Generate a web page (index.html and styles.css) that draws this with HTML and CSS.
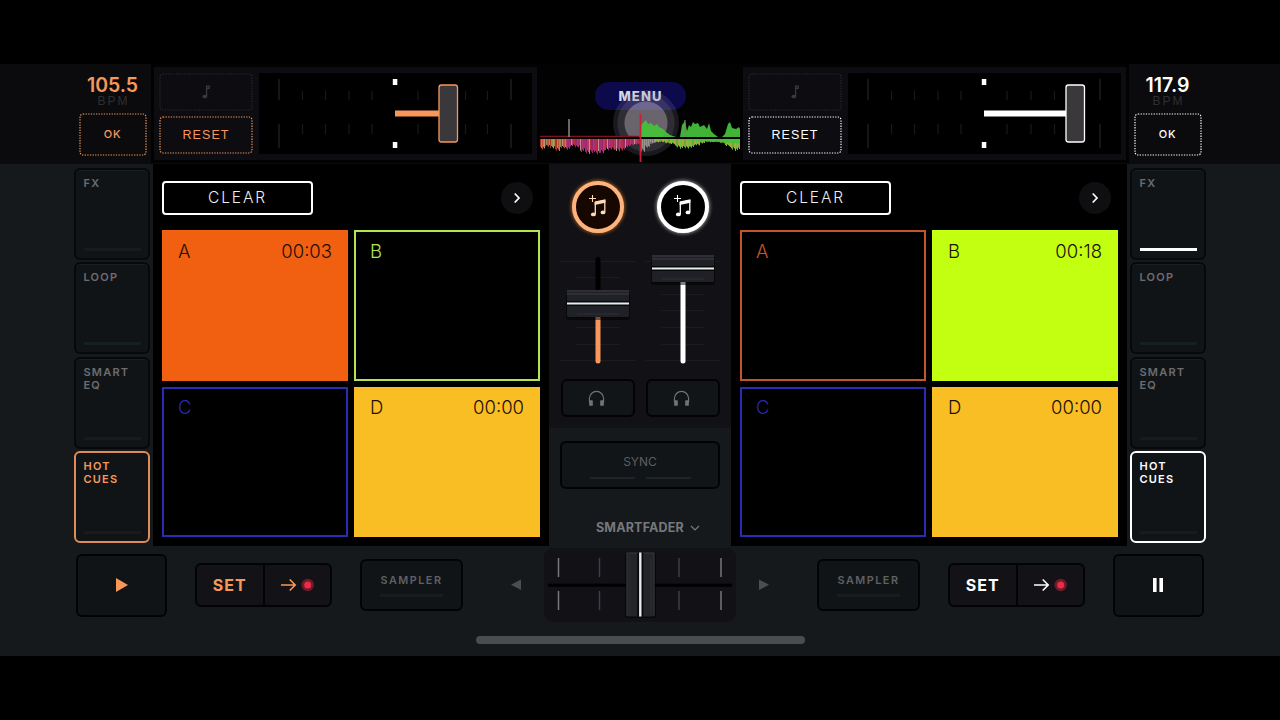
FILE: index.html
```html
<!DOCTYPE html>
<html lang="en">
<head>
    <meta charset="UTF-8">
    <meta name="viewport" content="width=device-width, initial-scale=1.0">
    <title>DJ Decks</title>
    <link rel="stylesheet" href="styles.css">
</head>
<body>
    <!-- shared icons -->
    <svg class="defs" width="0" height="0">
        <symbol id="note" viewBox="0 0 10 14">
            <path d="M5.6 11V1.2h2.6v2.2H5.6" fill="none" stroke="currentColor" stroke-width="1.3"/>
            <ellipse cx="3.8" cy="11.6" rx="2.4" ry="1.8" fill="currentColor"/>
        </symbol>
        <symbol id="add-music" viewBox="0 0 20 24">
            <path d="M1 4.5h7M4.5 1v7" stroke="currentColor" stroke-width="1.1"/>
            <path d="M7.3 20V8.5l9.5-2V18" fill="none" stroke="currentColor" stroke-width="1.3"/>
            <path d="M6.7 7.5l10.7-2.3v3.6L6.7 11z" fill="currentColor"/>
            <ellipse cx="5.4" cy="20.4" rx="2.5" ry="1.9" fill="currentColor"/>
            <ellipse cx="15" cy="18.4" rx="2.4" ry="1.9" fill="currentColor"/>
        </symbol>
        <symbol id="headphones" viewBox="0 0 18 18">
            <path d="M1.5 13V9a7.5 7.5 0 0 1 15 0v4" fill="none" stroke="currentColor" stroke-width="1.2"/>
            <rect x="1.2" y="10.8" width="3.9" height="6" rx="1" fill="currentColor"/>
            <rect x="12.9" y="10.8" width="3.9" height="6" rx="1" fill="currentColor"/>
        </symbol>
        <symbol id="go-record" viewBox="0 0 34 14">
            <path d="M1 7h14M9.7 1.5L15.2 7l-5.500 5.500" fill="none" stroke="currentColor" stroke-width="1.6"/>
            <circle cx="27.7" cy="7" r="6.2" fill="#6d1a2a"/>
            <circle cx="27.7" cy="7" r="3.5" fill="#ee2b45"/>
        </symbol>
        <symbol id="chevron-right" viewBox="0 0 8 12">
            <path d="M1.7 1.5L6 6l-4.300 4.500" fill="none" stroke="currentColor" stroke-width="1.7"/>
        </symbol>
        <symbol id="pitch-scale" viewBox="0 0 273 81">
            <path d="M20 6v21M20 51v24M252 6v21M252 51v24" stroke="#232325" stroke-width="1.3"/>
            <path d="M43.5 18v9M66.5 18v9M90 18v9M113 18v9M159 18v9M183 18v9M206.5 18v9M228.5 18v9M43.5 51v10M66.5 51v10M90 51v10M113 51v10M159 51v10M183 51v10M206.5 51v10M228.5 51v10" stroke="#19191b" stroke-width="1.2"/>
            <path d="M133.8 6h4.500v6h-4.500zM133.8 69h4.500v6h-4.500z" fill="#fff"/>
        </symbol>
        <symbol id="fader-cap" viewBox="-1 0 64 32">
            <rect x="-1" y="4" width="64" height="26" rx="3" fill="#000" opacity=".5"/>
            <rect y="0" width="62" height="27" rx="1" fill="#202126"/>
            <path d="M0 1h62M0 4h62" stroke="#3c3d42"/>
            <path d="M10 24h42" stroke="#2e2f34"/>
            <path d="M0 13.5h62" stroke="#08080a" stroke-width="5"/>
            <path d="M0 13.5h62" stroke="#e4efee" stroke-width="2.2"/>
        </symbol>
    </svg>

    <div class="app">
        <div class="top">
            <div class="bpm left">
                <div class="bpm-value">105.5</div>
                <div class="bpm-label">BPM</div>
                <button class="dotted ok"><svg class="dots"><rect/></svg>OK</button>
            </div>
            <div class="pitch left">
                <div class="pitch-buttons">
                    <button class="dotted muted"><svg class="dots"><rect/></svg><svg width="10" height="14"><use href="#note"/></svg></button>
                    <button class="dotted"><svg class="dots"><rect/></svg>RESET</button>
                </div>
                <svg class="pitch-slider" width="273" height="81">
                    <use href="#pitch-scale"/>
                    <rect x="136" y="37.5" width="45" height="6" fill="currentColor"/>
                    <rect x="180" y="12" width="18.5" height="57" rx="2.5" fill="#3a383b" stroke="currentColor" stroke-width="1.3"/>
                </svg>
            </div>
            <div class="wave">
                <div class="menu">MENU</div>
                <div class="touch"></div>
                <svg id="wave" width="200" height="95" viewBox="0 0 200 95">
                    <g id="bars"></g>
                    <path d="M0 69.3h99" stroke="#7d1420" stroke-width="1.2"/>
                    <path d="M29 52v18" stroke="#8d8888" stroke-width="1.5"/>
                    <path d="M101 70V58l3-3 2-2 2 4 3-1 3 3 3-2 2 3 4 2 3 3 4 3 6 2h4l2-12 3-4 2 10 2-6 2 2 2-5 2 2 3-1 2 4 4-2 3 4 2-6 2 8 3 3 4 3h4l3-3 3-10 2-2 2 6 4 1 3-2 2 4 2 1 2-3 3 2v13z" fill="#46c23b" opacity=".93"/>
                    <path d="M145 70V53" stroke="#6d8a67" stroke-width="1.2"/>
                    <path d="M0 71h200" stroke="#000" stroke-width="2"/>
                    <path d="M100.5 47v49" stroke="#c91f37" stroke-width="1.8"/>
                </svg>
            </div>
            <div class="pitch right">
                <div class="pitch-buttons">
                    <button class="dotted muted"><svg class="dots"><rect/></svg><svg width="10" height="14"><use href="#note"/></svg></button>
                    <button class="dotted"><svg class="dots"><rect/></svg>RESET</button>
                </div>
                <svg class="pitch-slider" width="273" height="81">
                    <use href="#pitch-scale"/>
                    <rect x="136" y="37.5" width="83" height="6" fill="currentColor"/>
                    <rect x="218" y="12" width="18.5" height="57" rx="2.5" fill="#3a383b" stroke="currentColor" stroke-width="1.3"/>
                </svg>
            </div>
            <div class="bpm right">
                <div class="bpm-value">117.9</div>
                <div class="bpm-label">BPM</div>
                <button class="dotted ok"><svg class="dots"><rect/></svg>OK</button>
            </div>
        </div>

        <div class="main">
            <div class="tabs left">
                <div class="tab">FX<i></i></div>
                <div class="tab green">LOOP<i></i></div>
                <div class="tab">SMART<br>EQ<i></i></div>
                <div class="tab active">HOT<br>CUES<i></i></div>
            </div>

            <div class="cues">
                <div class="cues-head">
                    <button class="clear">CLEAR</button>
                    <button class="next"><svg width="8" height="12"><use href="#chevron-right"/></svg></button>
                </div>
                <div class="pads">
                    <div class="pad orange filled"><span>A</span><span>00:03</span></div>
                    <div class="pad lime"><span>B</span></div>
                    <div class="pad blue"><span>C</span></div>
                    <div class="pad yellow filled"><span>D</span><span>00:00</span></div>
                </div>
            </div>

            <div class="mixer">
                <div class="channels">
                    <div class="channel left">
                        <button class="load"><svg width="20" height="24"><use href="#add-music"/></svg></button>
                        <svg class="volume" width="76" height="120">
                            <path d="M0 11.5h76M0 110.5h76M16 27.5h44M16 77.5h44M16 94.5h44" stroke="#1b1b20"/>
                            <path d="M38 9.5v50" stroke="#000" stroke-width="5" stroke-linecap="round"/>
                            <path d="M38 60v51" stroke="currentColor" stroke-width="5" stroke-linecap="round"/>
                            <use href="#fader-cap" x="6" y="40" width="64" height="32"/>
                        </svg>
                        <button class="cue"><svg width="17" height="17"><use href="#headphones"/></svg></button>
                    </div>
                    <div class="channel right">
                        <button class="load"><svg width="20" height="24"><use href="#add-music"/></svg></button>
                        <svg class="volume" width="76" height="120">
                            <path d="M0 11.5h76M0 110.5h76M16 44.5h44M16 60.5h44M16 77.5h44M16 94.5h44" stroke="#1b1b20"/>
                            <path d="M38 20v91" stroke="currentColor" stroke-width="5" stroke-linecap="round"/>
                            <use href="#fader-cap" x="6" y="5" width="64" height="32"/>
                        </svg>
                        <button class="cue"><svg width="17" height="17"><use href="#headphones"/></svg></button>
                    </div>
                </div>
                <button class="sync">SYNC<div class="sync-leds"><i></i><i></i></div></button>
                <div class="smartfader">SMARTFADER
                    <svg width="10" height="6"><path d="M1 1l4 4 4-4" fill="none" stroke="currentColor" stroke-width="1.2"/></svg>
                </div>
            </div>

            <div class="cues">
                <div class="cues-head">
                    <button class="clear">CLEAR</button>
                    <button class="next"><svg width="8" height="12"><use href="#chevron-right"/></svg></button>
                </div>
                <div class="pads">
                    <div class="pad orange"><span>A</span></div>
                    <div class="pad lime filled"><span>B</span><span>00:18</span></div>
                    <div class="pad blue"><span>C</span></div>
                    <div class="pad yellow filled"><span>D</span><span>00:00</span></div>
                </div>
            </div>

            <div class="tabs right">
                <div class="tab lit">FX<i></i></div>
                <div class="tab green">LOOP<i></i></div>
                <div class="tab">SMART<br>EQ<i></i></div>
                <div class="tab active">HOT<br>CUES<i></i></div>
            </div>
        </div>

        <div class="bottom">
            <div class="transport left">
                <button class="play"><svg width="12" height="14"><path d="M0 0l12 7L0 14z" fill="currentColor"/></svg></button>
                <div class="set"><span>SET</span><span><svg width="34" height="14"><use href="#go-record"/></svg></span></div>
                <button class="sampler">SAMPLER<i></i></button>
                <svg class="nudge" width="10" height="12"><path d="M10 .5v10.500L0 5.800z" fill="currentColor"/></svg>
            </div>
            <svg class="crossfader" width="192" height="74">
                <rect width="192" height="74" rx="9" fill="#111116"/>
                <path d="M4 37.3h184" stroke="#000" stroke-width="3"/>
                <path d="M14.5 10v19M14.5 43v19M177 10v19M177 43v19" stroke="#77777b" stroke-width="1.5"/>
                <path d="M55.5 10v19M55.5 43v19M135 10v19M135 43v19" stroke="#3f3f43" stroke-width="1.5"/>
                <rect x="81" y="5" width="31" height="65" rx="2" fill="#000" opacity=".5"/>
                <rect x="82.5" y="4.5" width="28" height="64" rx="1" fill="#232428"/>
                <path d="M83 5v63M110 5v63M83 5h27" stroke="#3b3c40" stroke-width=".8" fill="none"/>
                <path d="M86 7v60M107 10v56" stroke="#303135" stroke-width=".8" fill="none"/>
                <path d="M96.3 4.5v64" stroke="#08080a" stroke-width="6"/>
                <path d="M96.3 4.5v64" stroke="#e9e9ee" stroke-width="2.4"/>
            </svg>
            <div class="transport right">
                <svg class="nudge" width="10" height="12"><path d="M0 .5v10.500l10-5.200z" fill="currentColor"/></svg>
                <button class="sampler">SAMPLER<i></i></button>
                <div class="set"><span>SET</span><span><svg width="34" height="14"><use href="#go-record"/></svg></span></div>
                <button class="play"><svg width="12" height="14"><path d="M0 0h3.600v14H0zM6.400 0H10v14H6.400z" fill="currentColor"/></svg></button>
            </div>
        </div>
        <div class="home-bar"></div>
    </div>

    <script>
        // lower half of the waveform, one bar per pixel
        const bars = document.getElementById('bars');
        const leftColors = ['#a8352f', '#a08c48', '#c0562f', '#96904a', '#b23c70', '#9a2863', '#bd2c45', '#a52a78'];
        const rightColors = ['#5fae3c', '#9fae3e', '#6fbf3f', '#a8a33f', '#4f5bb0', '#5fc03c'];
        const heights = [10, 7, 9, 11, 9, 10, 7, 8, 12, 14, 13, 15, 13, 11, 10, 12, 11, 8, 6, 5, 12, 8, 4, 3, 3, 4, 5, 8, 9, 9, 8, 6, 4, 3, 3, 2, 4, 7, 10, 11];

        for (let x = 0; x < 200; x++) {
            const base = heights[Math.floor(x / 5)];
            const h = base * (0.78 + ((x * 37) % 11) / 32);
            let color;
            if (x < 100) {
                const shift = x < 26 ? 0 : 4;
                color = x % 9 === 4 ? '#c08d88' : leftColors[shift + (x * 7 + (x >> 2)) % 4];
            } else if (x < 115) {
                color = x % 2 ? '#7b7f70' : '#99938b';
            } else {
                color = x > 163 && x < 184 ? rightColors[x % 2 ? 4 : 3] : rightColors[(x >> 1) % 4];
            }
            const rect = document.createElementNS('http://www.w3.org/2000/svg', 'rect');
            rect.setAttribute('x', x);
            rect.setAttribute('y', 72);
            rect.setAttribute('width', 1);
            rect.setAttribute('height', h.toFixed(1));
            rect.setAttribute('fill', color);
            bars.appendChild(rect);
        }
    </script>
</body>
</html>
```
FILE: styles.css
```css
* {
    margin: 0;
    padding: 0;
    box-sizing: border-box;
}

body {
    background: #000;
    font-family: 'Inter', 'Liberation Sans', sans-serif;
    height: 720px;
    padding-top: 64px;
    overflow: hidden;
}

button {
    background: none;
    border: none;
    color: inherit;
    font-family: inherit;
    display: flex;
    align-items: center;
    justify-content: center;
}

svg {
    display: block;
}

.defs {
    position: absolute;
}

.left {
    color: #f7985a;
}

.right {
    color: #fff;
}

.app {
    width: 1280px;
    height: 592px;
    background: #15191c;
}

/* top bar */
.top {
    display: flex;
    height: 100px;
    background: #020203;
    border-bottom: 1px solid #0b0b0d;
}

.bpm {
    width: 151px;
    height: 99px;
    background: #0b0b0e;
    display: flex;
    flex-direction: column;
    align-items: center;
    padding-top: 11px;
}

.bpm.left {
    padding-left: 74px;
    margin-right: 3px;
}

.bpm.right {
    padding-right: 74px;
    margin-left: 3px;
}

.bpm-value {
    font-size: 19.5px;
    line-height: 20px;
    font-weight: 600;
}

.bpm-label {
    font-family: 'Liberation Sans', sans-serif;
    font-size: 12px;
    line-height: 13px;
    letter-spacing: 2px;
    padding-left: 2px;
    color: #2f2f33;
    margin-bottom: 5px;
}

.dotted {
    width: 94px;
    height: 38px;
    position: relative;
    font-family: 'Liberation Sans', sans-serif;
    font-size: 12.5px;
    letter-spacing: 1.1px;
}

.dots {
    position: absolute;
    left: 0;
    top: 0;
    width: 100%;
    height: 100%;
}

.dots rect {
    x: 1px;
    y: 1px;
    width: calc(100% - 2px);
    height: calc(100% - 2px);
    rx: 3px;
    fill: none;
    stroke: currentColor;
    stroke-width: 1.2px;
    stroke-dasharray: 1.3 1.3;
}

.dotted.ok {
    width: 68px;
    height: 43px;
    font-family: 'Inter', sans-serif;
    font-size: 11px;
    font-weight: 500;
    letter-spacing: 0.8px;
    padding-bottom: 1px;
    flex-shrink: 0;
}

.dotted.muted {
    color: #3a3a3e;
}

.muted .dots {
    color: #2a2a2e;
}

.pitch {
    width: 383px;
    height: 93px;
    margin-top: 3px;
    background: #0c0c11;
    padding: 6px 5px 6px 5px;
    display: flex;
    justify-content: space-between;
}

.pitch-buttons {
    display: flex;
    flex-direction: column;
    justify-content: space-between;
}

.pitch-slider {
    background: #000;
}

.wave {
    width: 206px;
    position: relative;
    padding: 3px 3px 0 3px;
}

#wave {
    position: relative;
}

.menu {
    position: absolute;
    left: 58px;
    top: 18px;
    width: 91px;
    height: 28px;
    border-radius: 14px;
    background: #0d0a4c;
    color: #d6d6e4;
    font-size: 13px;
    font-weight: 800;
    letter-spacing: 1.1px;
    line-height: 28px;
    text-align: center;
}

.touch {
    position: absolute;
    left: 76px;
    top: 26px;
    width: 66px;
    height: 66px;
    border-radius: 50%;
    background: radial-gradient(circle, rgba(190, 180, 195, 0.55) 21px, rgba(150, 145, 165, 0.3) 22px, rgba(150, 145, 165, 0.3) 28px, rgba(150, 145, 165, 0.16) 29px);
}

/* decks */
.main {
    display: flex;
    height: 382px;
}

.tabs {
    width: 153px;
    padding-top: 3.5px;
    display: flex;
    flex-direction: column;
    gap: 2.6px;
}

.tabs.left {
    padding-left: 74px;
}

.tabs.right {
    padding-left: 3px;
}

.tab {
    width: 76px;
    height: 92px;
    border: 2px solid #060809;
    border-radius: 6px;
    background: #111416;
    box-shadow: inset 0 1px 0 #1a1d20;
    padding: 7px 7px 7px 7.5px;
    color: #6c6d70;
    font-size: 11px;
    font-weight: 600;
    line-height: 13px;
    letter-spacing: 1.2px;
    display: flex;
    flex-direction: column;
}

.tab i {
    margin-top: auto;
    height: 3px;
    background: #181b1e;
}

.tab.green i {
    background: #14211e;
}

.tab.lit i {
    background: #fff;
}

.tab.active {
    color: inherit;
    border-color: currentColor;
    box-shadow: none;
}

.left .tab.active {
    border-color: #e08c59;
}

.cues {
    width: 396px;
    background: #000;
    padding: 16px 9px 9px 9px;
}

.cues-head {
    display: flex;
    justify-content: space-between;
    align-items: center;
    height: 35px;
    padding-right: 7px;
    margin-bottom: 15px;
}

.clear {
    width: 151px;
    height: 34px;
    border: 2px solid #fff;
    border-radius: 4px;
    color: #eee;
    font-size: 15.5px;
    font-weight: 300;
    letter-spacing: 1.9px;
}

.next {
    width: 32px;
    height: 32px;
    border-radius: 50%;
    background: #0f0f12;
    color: #fff;
}

.pads {
    display: grid;
    grid-template-columns: 186px 186px;
    grid-template-rows: 151px 150px;
    gap: 6px;
}

.pad {
    border: 2px solid currentColor;
    padding: 9px 14px 0 14px;
    font-size: 18.5px;
    line-height: 20px;
    font-weight: 300;
    display: flex;
    justify-content: space-between;
    align-items: flex-start;
}

.blue,
.yellow {
    padding-top: 8px;
}

.orange {
    color: #c4552b;
}

.orange.filled {
    background: #f06010;
    border-color: #f06010;
}

.lime {
    color: #b0e650;
}

.lime.filled {
    background: #c3ff10;
    border-color: #c3ff10;
}

.blue {
    color: #2b2bb4;
}

.yellow.filled {
    background: #f9be23;
    border-color: #f9be23;
}

.pad.filled {
    color: #1d0f08;
}

/* mixer */
.mixer {
    width: 182px;
    display: flex;
    flex-direction: column;
    align-items: center;
    background: #15191c;
}

.channels {
    width: 182px;
    height: 264px;
    background: #111116;
    display: flex;
    justify-content: center;
    gap: 9px;
    padding-top: 17px;
}

.channel {
    width: 76px;
    display: flex;
    flex-direction: column;
    align-items: center;
}

.load {
    width: 52px;
    height: 52px;
    border-radius: 50%;
    border: 4px solid #ffb37c;
    background: #170701;
    box-shadow: 0 0 4px #d07a28;
    color: #ffd9b8;
    padding-bottom: 2px;
    flex-shrink: 0;
}

.right .load {
    border-color: #fff;
    background: #000;
    box-shadow: 0 0 4px #ccc;
    color: #fff;
}

.volume {
    margin-top: 17px;
    flex-shrink: 0;
}

.cue {
    width: 74px;
    height: 38px;
    border: 2px solid #030304;
    border-radius: 6px;
    background: #121518;
    color: #737376;
    margin-top: 9px;
    padding: 1px 2px 0 0;
    flex-shrink: 0;
}

.sync {
    width: 160px;
    height: 48px;
    margin-top: 13px;
    border: 2px solid #020303;
    border-radius: 6px;
    background: #121517;
    color: #5d5e61;
    font-size: 12px;
    flex-direction: column;
    gap: 8px;
    padding-top: 2px;
}

.sync-leds {
    display: flex;
    gap: 11px;
}

.sync-leds i {
    width: 45px;
    height: 2px;
    background: #202427;
}

.smartfader {
    display: flex;
    align-items: center;
    gap: 6px;
    margin-top: 31px;
    padding-left: 16px;
    color: #77787b;
    font-size: 12.5px;
    font-weight: 700;
    letter-spacing: 0.2px;
    line-height: 16px;
    width: 100%;
    justify-content: center;
}

/* bottom row */
.bottom {
    display: flex;
    justify-content: center;
    height: 78px;
    padding-top: 2px;
}

.transport {
    width: 468px;
    height: 74px;
    display: flex;
    align-items: center;
}

.play {
    width: 91px;
    height: 63px;
    border: 2px solid #020303;
    border-radius: 6px;
    background: #111416;
}

.set {
    width: 137px;
    height: 44px;
    border: 2px solid #020303;
    border-radius: 6px;
    background: #131317;
    display: flex;
    font-size: 16px;
    font-weight: 700;
    letter-spacing: 1px;
}

.set span {
    flex: 1;
    display: flex;
    align-items: center;
    justify-content: center;
}

.set span + span {
    border-left: 2px solid #020303;
}

.sampler {
    width: 103px;
    height: 52px;
    border: 2px solid #020303;
    border-radius: 6px;
    background: #111416;
    color: #606164;
    font-size: 10.8px;
    font-weight: 600;
    letter-spacing: 1.5px;
    flex-direction: column;
    gap: 7px;
}

.sampler i {
    width: 63px;
    height: 3px;
    background: #191c1f;
}

.nudge {
    color: #4b4d50;
}

.transport.left .set {
    margin: 0 28px;
}

.transport.left .nudge {
    margin-left: 48px;
}

.transport.right .nudge {
    margin: 0 48px 0 23px;
}

.transport.right .set {
    margin: 0 28px;
}

.home-bar {
    width: 329px;
    height: 8px;
    border-radius: 4px;
    background: #4a4d50;
    margin: 12px auto 0;
}
```
